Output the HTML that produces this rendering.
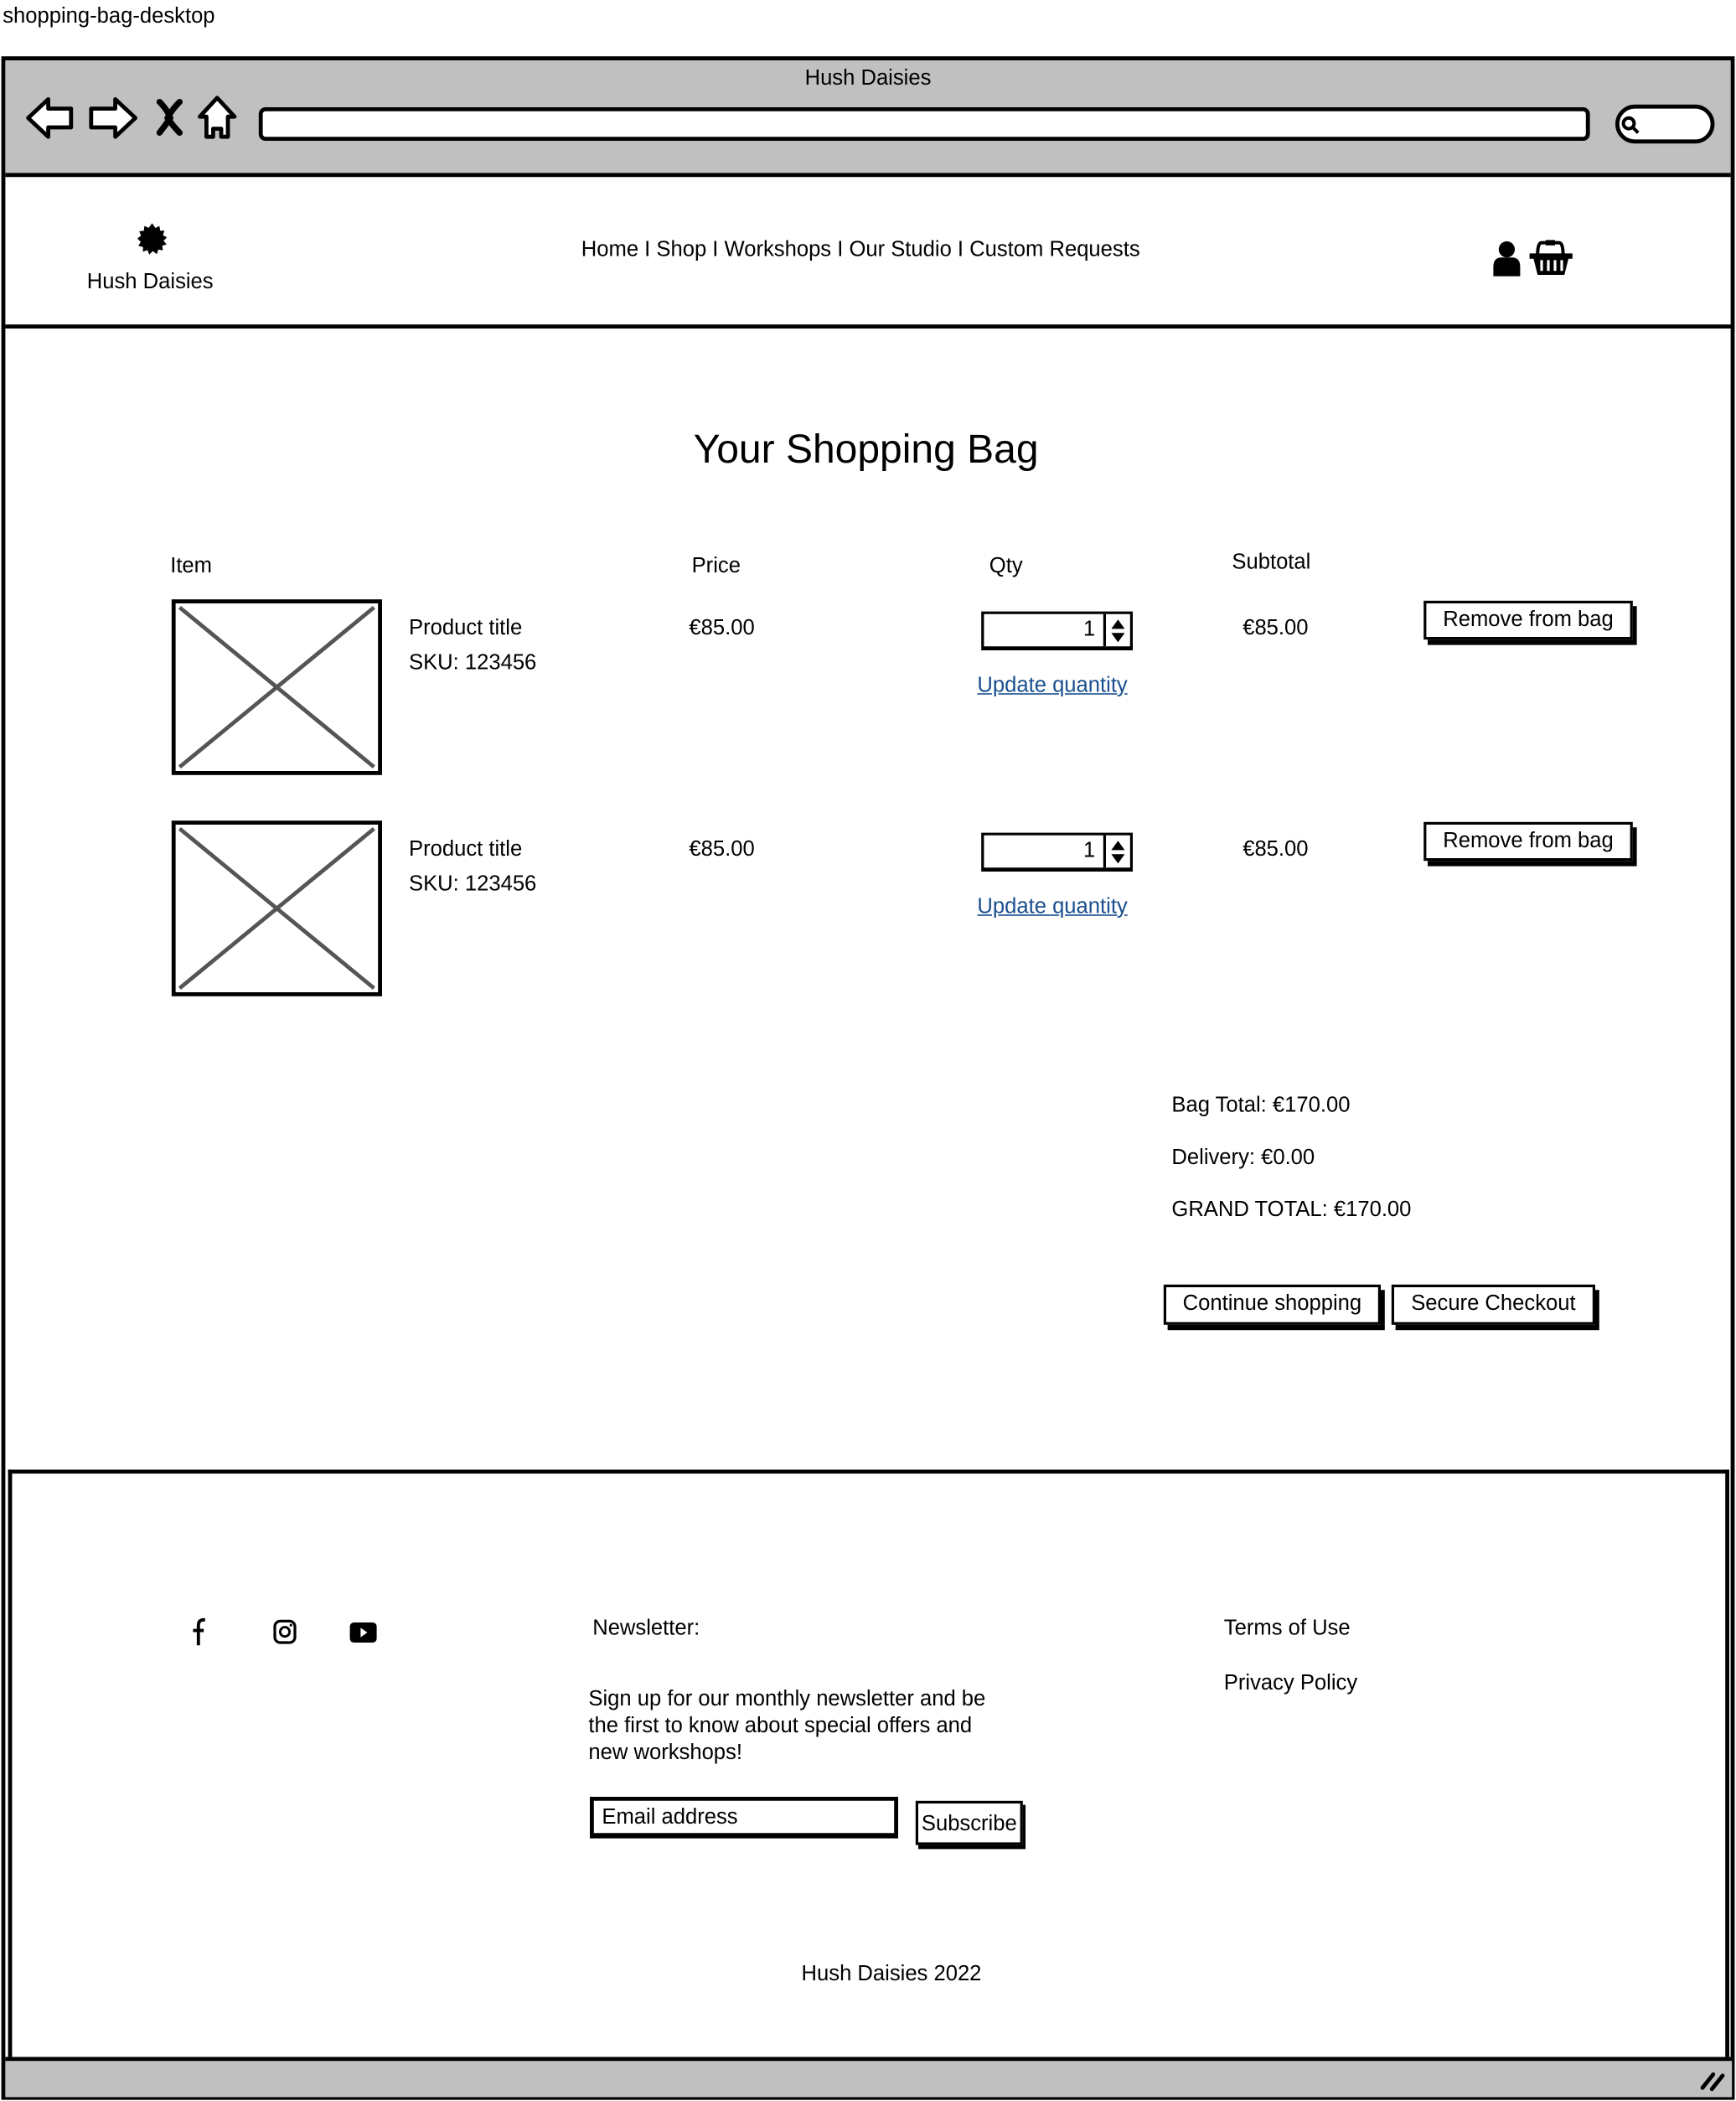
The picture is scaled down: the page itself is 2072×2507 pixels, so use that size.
<!DOCTYPE html>
<html><head><meta charset="utf-8">
<style>
html,body{margin:0;padding:0;background:#fff;}
body{width:2072px;height:2506px;overflow:hidden;position:relative;font-family:"Liberation Sans",sans-serif;color:#000;}
#w{position:absolute;left:0;top:0;width:1295px;height:1567px;transform:scale(1.6);transform-origin:0 0;}
.a{position:absolute;white-space:nowrap;font-size:16px;line-height:20px;margin-top:1px;}
.box{position:absolute;box-sizing:border-box;}
.btn{position:absolute;box-sizing:border-box;border:2px solid #000;background:#fff;box-shadow:3px 4px 0 #000;font-size:16px;text-align:center;}
.img{position:absolute;box-sizing:border-box;border:3px solid #000;width:157px;height:131px;background:#fff;}
.qty{position:absolute;box-sizing:border-box;border:2px solid #000;border-bottom-width:3px;width:113px;height:29px;}
.link{color:#1a4f8f;text-decoration:underline;}
</style></head><body><div id="w">
<div class="a" style="left:2px;top:2px;">shopping-bag-desktop</div>

<div class="box" style="left:1px;top:42px;width:1293px;height:1524px;border:3px solid #000;background:#fff;"></div>
<div class="box" style="left:4px;top:45px;width:1287px;height:87px;background:#c0c0c0;border-bottom:3px solid #000;"></div>
<div class="a" style="left:0;width:1295px;text-align:center;top:48px;">Hush Daisies</div>
<svg class="box" style="left:15px;top:66px;" width="170" height="44" viewBox="0 0 170 44">
<path d="M6 22 L21 8 L21 15 L38 15 L38 29 L21 29 L21 36 Z" fill="#fff" stroke="#000" stroke-width="3" stroke-linejoin="round"/>
<path d="M86 22 L71 8 L71 15 L53 15 L53 29 L71 29 L71 36 Z" fill="#fff" stroke="#000" stroke-width="3" stroke-linejoin="round"/>
<path d="M104 10 Q110 16 112 22 Q108 28 104 33 M119 10 Q113 16 110 22 Q114 28 119 33" fill="none" stroke="#000" stroke-width="4.5" stroke-linecap="round"/>
<path d="M147 7 L134 21 L139 21 L139 36 L144 36 L144 30 L150 30 L150 36 L155 36 L155 21 L160 21 Z" fill="#fff" stroke="#000" stroke-width="3" stroke-linejoin="round"/>
</svg>
<div class="box" style="left:193px;top:80px;width:993px;height:25px;border:3px solid #000;border-radius:5px;background:#fff;"></div>
<div class="box" style="left:1205px;top:78px;width:74px;height:29px;border:3px solid #000;border-radius:15px;background:#fff;"></div>
<svg class="box" style="left:1208px;top:85px;" width="16" height="16"><circle cx="7" cy="7" r="4" fill="none" stroke="#000" stroke-width="2.5"/><path d="M10 10 L14 14" stroke="#000" stroke-width="2.5"/></svg>

<div class="box" style="left:4px;top:242px;width:1288px;height:3px;background:#000;"></div>
<svg class="box" style="left:100px;top:165px;" width="27" height="27" viewBox="-13.5 -13.5 27 27">
<polygon fill="#000" points="0,-12 2.4,-8.5 5.4,-10 6,-6.5 9.2,-6.5 8,-3.2 11,-1.5 8.5,1 10.8,3.8 7.5,4.8 8,8.2 4.6,7.6 3.5,11 0.5,8.8 -2.2,11.4 -3.4,8 -6.9,9.2 -6.8,5.8 -10.3,4.8 -8.5,2 -11,-0.6 -8.3,-2.8 -9.6,-6 -6.2,-6.4 -5.8,-10 -2.6,-8.6"/>
</svg>
<div class="a" style="left:0;width:224px;text-align:center;top:200px;">Hush Daisies</div>
<div class="a" style="left:0;width:1284px;text-align:center;top:176px;">Home I Shop I Workshops I Our Studio I Custom Requests</div>
<svg class="box" style="left:1111px;top:178px;" width="64" height="30" viewBox="0 0 64 30">
<circle cx="13" cy="8" r="6" fill="#000"/>
<path d="M3 28 L3 21 Q3 14 9 14 L17 14 Q23 14 23 21 L23 28 Z" fill="#000"/>
<path d="M36 12 Q36 3 39 3 L52 3 Q55 3 55 12" fill="none" stroke="#000" stroke-width="2.5"/>
<rect x="42" y="1" width="7" height="4" fill="#000"/>
<path d="M30 11 L62 11 L62 15 L59 15 L56 27 L36 27 L33 15 L30 15 Z" fill="#000"/>
<rect x="38" y="16" width="2" height="8" fill="#fff"/><rect x="43" y="16" width="2" height="8" fill="#fff"/><rect x="48" y="16" width="2" height="8" fill="#fff"/><rect x="53" y="16" width="2" height="8" fill="#fff"/>
</svg>

<div class="a" style="left:0;width:1292px;text-align:center;top:316px;font-size:30px;line-height:38px;">Your Shopping Bag</div>

<div class="a" style="left:127px;top:412px;">Item</div>
<div class="a" style="left:516px;top:412px;">Price</div>
<div class="a" style="left:738px;top:412px;">Qty</div>
<div class="a" style="left:919px;top:409px;">Subtotal</div>

<div class="img" style="left:128px;top:447px;"><svg width="151" height="125" style="display:block"><path d="M3 3 L148 122 M148 3 L3 122" stroke="#555" stroke-width="3"/></svg></div>
<div class="a" style="left:305px;top:458px;">Product title</div>
<div class="a" style="left:305px;top:484px;">SKU: 123456</div>
<div class="a" style="left:514px;top:458px;">€85.00</div>
<div class="qty" style="left:732px;top:456px;"><span class="a" style="right:26px;top:1px;">1</span><div class="box" style="right:0;top:0;width:20px;height:24px;border-left:2px solid #000;"><svg width="18" height="24"><path d="M9 4 L14 11 L4 11 Z M9 21 L14 14 L4 14 Z" fill="#000"/></svg></div></div>
<div class="a link" style="left:729px;top:501px;">Update quantity</div>
<div class="a" style="left:927px;top:458px;">€85.00</div>
<div class="btn" style="left:1062px;top:448px;width:156px;height:29px;line-height:25px;">Remove from bag</div>

<div class="img" style="left:128px;top:612px;"><svg width="151" height="125" style="display:block"><path d="M3 3 L148 122 M148 3 L3 122" stroke="#555" stroke-width="3"/></svg></div>
<div class="a" style="left:305px;top:623px;">Product title</div>
<div class="a" style="left:305px;top:649px;">SKU: 123456</div>
<div class="a" style="left:514px;top:623px;">€85.00</div>
<div class="qty" style="left:732px;top:621px;"><span class="a" style="right:26px;top:1px;">1</span><div class="box" style="right:0;top:0;width:20px;height:24px;border-left:2px solid #000;"><svg width="18" height="24"><path d="M9 4 L14 11 L4 11 Z M9 21 L14 14 L4 14 Z" fill="#000"/></svg></div></div>
<div class="a link" style="left:729px;top:666px;">Update quantity</div>
<div class="a" style="left:927px;top:623px;">€85.00</div>
<div class="btn" style="left:1062px;top:613px;width:156px;height:29px;line-height:25px;">Remove from bag</div>

<div class="a" style="left:874px;top:814px;">Bag Total: €170.00</div>
<div class="a" style="left:874px;top:853px;">Delivery: €0.00</div>
<div class="a" style="left:874px;top:892px;">GRAND TOTAL: €170.00</div>
<div class="btn" style="left:868px;top:958px;width:162px;height:30px;line-height:26px;">Continue shopping</div>
<div class="btn" style="left:1038px;top:958px;width:152px;height:30px;line-height:26px;">Secure Checkout</div>

<div class="box" style="left:6px;top:1096px;width:1284px;height:441px;border:3px solid #000;border-bottom:none;"></div>
<svg class="box" style="left:138px;top:1205px;" width="150" height="24" viewBox="0 0 150 24">
<path d="M10 22 L10 7 Q10 3 14 3 L15 3 M6 11 L14 11" fill="none" stroke="#000" stroke-width="2.4"/>
<rect x="67" y="4" width="15" height="16" rx="4" fill="none" stroke="#000" stroke-width="2"/>
<circle cx="74.5" cy="12" r="3.5" fill="none" stroke="#000" stroke-width="1.8"/><circle cx="79" cy="7" r="1" fill="#000"/>
<rect x="123" y="5" width="20" height="15" rx="3" fill="#000"/><path d="M131 9 L136 12.5 L131 16 Z" fill="#fff"/>
</svg>
<div class="a" style="left:442px;top:1204px;">Newsletter:</div>
<div class="a" style="left:439px;top:1257px;white-space:normal;width:305px;line-height:20px;">Sign up for our monthly newsletter and be the first to know about special offers and new workshops!</div>
<div class="box" style="left:440px;top:1340px;width:230px;height:31px;border:3px solid #000;border-bottom-width:4px;"><span class="a" style="left:6px;top:2px;">Email address</span></div>
<div class="btn" style="left:683px;top:1343px;width:80px;height:33px;line-height:31px;box-shadow:2px 3px 0 #000;">Subscribe</div>
<div class="a" style="left:913px;top:1204px;">Terms of Use</div>
<div class="a" style="left:913px;top:1245px;">Privacy Policy</div>
<div class="a" style="left:0;width:1330px;text-align:center;top:1462px;">Hush Daisies 2022</div>

<div class="box" style="left:4px;top:1534px;width:1288px;height:30px;background:#c0c0c0;border-top:3px solid #000;"></div>
<svg class="box" style="left:1266px;top:1541px;" width="24" height="20"><path d="M4 16 L12 6 M11 17 L19 7" stroke="#000" stroke-width="3" stroke-linecap="round"/></svg>
</div></body></html>
